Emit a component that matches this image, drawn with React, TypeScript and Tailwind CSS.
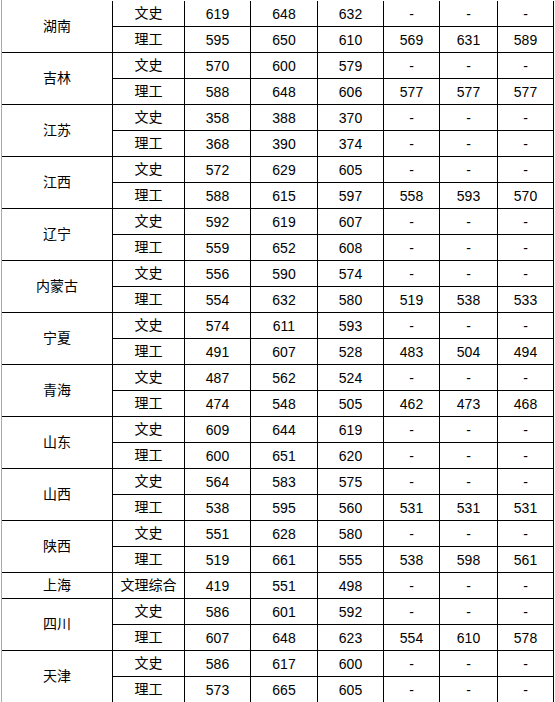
type Row = { subject: string; values: string[] };
type Province = { name: string; rows: Row[] };

const d = ['-', '-', '-'];

const provinces: Province[] = [
  { name: '湖南', rows: [{ subject: '文史', values: ['619', '648', '632', ...d] }, { subject: '理工', values: ['595', '650', '610', '569', '631', '589'] }] },
  { name: '吉林', rows: [{ subject: '文史', values: ['570', '600', '579', ...d] }, { subject: '理工', values: ['588', '648', '606', '577', '577', '577'] }] },
  { name: '江苏', rows: [{ subject: '文史', values: ['358', '388', '370', ...d] }, { subject: '理工', values: ['368', '390', '374', ...d] }] },
  { name: '江西', rows: [{ subject: '文史', values: ['572', '629', '605', ...d] }, { subject: '理工', values: ['588', '615', '597', '558', '593', '570'] }] },
  { name: '辽宁', rows: [{ subject: '文史', values: ['592', '619', '607', ...d] }, { subject: '理工', values: ['559', '652', '608', ...d] }] },
  { name: '内蒙古', rows: [{ subject: '文史', values: ['556', '590', '574', ...d] }, { subject: '理工', values: ['554', '632', '580', '519', '538', '533'] }] },
  { name: '宁夏', rows: [{ subject: '文史', values: ['574', '611', '593', ...d] }, { subject: '理工', values: ['491', '607', '528', '483', '504', '494'] }] },
  { name: '青海', rows: [{ subject: '文史', values: ['487', '562', '524', ...d] }, { subject: '理工', values: ['474', '548', '505', '462', '473', '468'] }] },
  { name: '山东', rows: [{ subject: '文史', values: ['609', '644', '619', ...d] }, { subject: '理工', values: ['600', '651', '620', ...d] }] },
  { name: '山西', rows: [{ subject: '文史', values: ['564', '583', '575', ...d] }, { subject: '理工', values: ['538', '595', '560', '531', '531', '531'] }] },
  { name: '陕西', rows: [{ subject: '文史', values: ['551', '628', '580', ...d] }, { subject: '理工', values: ['519', '661', '555', '538', '598', '561'] }] },
  { name: '上海', rows: [{ subject: '文理综合', values: ['419', '551', '498', ...d] }] },
  { name: '四川', rows: [{ subject: '文史', values: ['586', '601', '592', ...d] }, { subject: '理工', values: ['607', '648', '623', '554', '610', '578'] }] },
  { name: '天津', rows: [{ subject: '文史', values: ['586', '617', '600', ...d] }, { subject: '理工', values: ['573', '665', '605', ...d] }] },
];

const cell = 'flex items-center justify-center border-r border-b border-black';

export default function App() {
  return (
    <div
      className="bg-white min-h-screen text-[14px] text-black"
      style={{ fontFamily: '"Liberation Sans", "Noto Sans CJK SC", sans-serif' }}
    >
      <div className="ml-px border-l border-[#a8a8a8] pt-px">
        <div className="grid grid-cols-[111px_72px_66px_67px_66px_56px_58px_56px] auto-rows-[26px]">
          {provinces.map((p) => (
            <div key={p.name} className="contents">
              <div className={`${cell} ${p.rows.length === 2 ? 'row-span-2' : ''}`}>{p.name}</div>
              {p.rows.map((r, i) => (
                <div key={i} className="contents">
                  <div className={cell}>{r.subject}</div>
                  {r.values.map((v, j) => (
                    <div key={j} className={`${cell} pt-px`}>
                      {v}
                    </div>
                  ))}
                </div>
              ))}
            </div>
          ))}
        </div>
      </div>
    </div>
  );
}
